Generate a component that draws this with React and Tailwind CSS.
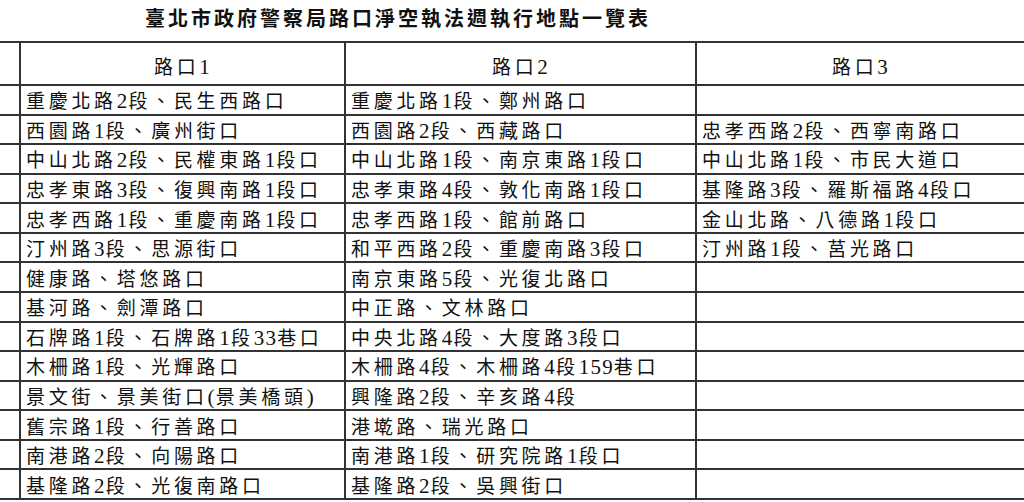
import React from "react";

const col1 = [
  "重慶北路2段、民生西路口",
  "西園路1段、廣州街口",
  "中山北路2段、民權東路1段口",
  "忠孝東路3段、復興南路1段口",
  "忠孝西路1段、重慶南路1段口",
  "汀州路3段、思源街口",
  "健康路、塔悠路口",
  "基河路、劍潭路口",
  "石牌路1段、石牌路1段33巷口",
  "木柵路1段、光輝路口",
  "景文街、景美街口(景美橋頭)",
  "舊宗路1段、行善路口",
  "南港路2段、向陽路口",
  "基隆路2段、光復南路口",
];

const col2 = [
  "重慶北路1段、鄭州路口",
  "西園路2段、西藏路口",
  "中山北路1段、南京東路1段口",
  "忠孝東路4段、敦化南路1段口",
  "忠孝西路1段、館前路口",
  "和平西路2段、重慶南路3段口",
  "南京東路5段、光復北路口",
  "中正路、文林路口",
  "中央北路4段、大度路3段口",
  "木柵路4段、木柵路4段159巷口",
  "興隆路2段、辛亥路4段",
  "港墘路、瑞光路口",
  "南港路1段、研究院路1段口",
  "基隆路2段、吳興街口",
];

const col3 = [
  "",
  "忠孝西路2段、西寧南路口",
  "中山北路1段、市民大道口",
  "基隆路3段、羅斯福路4段口",
  "金山北路、八德路1段口",
  "汀州路1段、莒光路口",
  "",
  "",
  "",
  "",
  "",
  "",
  "",
  "",
];

function Txt({ s }) {
  const parts = s.split(/(\d+|[()])/).filter((p) => p !== "");
  return (
    <>
      {parts.map((p, i) =>
        /^[\d()]+$/.test(p) ? (
          <span key={i} className="text-[21px] tracking-[1.2px]">
            {p}
          </span>
        ) : (
          <span key={i}>{p}</span>
        )
      )}
    </>
  );
}

const cell =
  "border-r-2 border-b-2 border-[#333] flex items-center pl-[5px] pt-[4px] text-[19px] tracking-[3.7px] leading-none whitespace-nowrap overflow-hidden text-[#111]";
const cellLast =
  "border-b-2 border-[#333] flex items-center pl-[5px] pt-[4px] text-[19px] tracking-[3.7px] leading-none whitespace-nowrap overflow-hidden text-[#111]";
const head =
  "border-r-2 border-b-2 border-[#333] flex items-center justify-center pt-[8px] text-[19px] tracking-[3.7px] leading-none text-[#111]";
const headLast =
  "border-b-2 border-[#333] flex items-center justify-center pt-[8px] text-[19px] tracking-[3.7px] leading-none text-[#111]";
const idx = "border-r-2 border-b-2 border-[#333]";

export default function App() {
  return (
    <div className="w-[1024px] h-[502px] bg-white overflow-hidden font-['Liberation_Serif','Noto_Sans_CJK_TC',serif]">
      <div className="h-[41px] pl-[145px] pt-[5px] text-[20px] font-bold tracking-[3px] leading-[28px] text-[#111] whitespace-nowrap">
        臺北市政府警察局路口淨空執法週執行地點一覽表
      </div>
      <div className="grid grid-cols-[21px_325px_351px_1fr] grid-rows-[43px_repeat(14,minmax(0,1fr))] h-[459px] border-t-2 border-[#333]">
        <div className={idx}></div>
        <div className={head}>
          <Txt s="路口1" />
        </div>
        <div className={head}>
          <Txt s="路口2" />
        </div>
        <div className={headLast}>
          <Txt s="路口3" />
        </div>
        {col1.map((c, i) => (
          <React.Fragment key={i}>
            <div className={idx}></div>
            <div className={cell}>
              <Txt s={c} />
            </div>
            <div className={cell}>
              <Txt s={col2[i]} />
            </div>
            <div className={cellLast}>
              <Txt s={col3[i]} />
            </div>
          </React.Fragment>
        ))}
      </div>
    </div>
  );
}
